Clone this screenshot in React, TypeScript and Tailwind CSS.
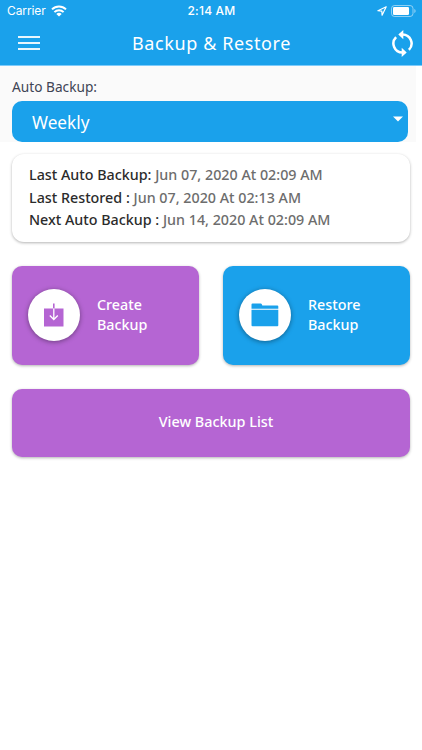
import React from 'react';

const backupInfo = [
  { label: 'Last Auto Backup:', value: 'Jun 07, 2020 At 02:09 AM' },
  { label: 'Last Restored :', value: 'Jun 07, 2020 At 02:13 AM' },
  { label: 'Next Auto Backup :', value: 'Jun 14, 2020 At 02:09 AM' }
];

const WifiIcon = () => (
  <svg width="16" height="12" viewBox="0 0 16 12" fill="none" stroke="white" strokeWidth="2">
    <path d="M1 4.4a10 10 0 0 1 14 0" />
    <path d="M3.4 7.1a6.6 6.6 0 0 1 9.2 0" />
    <path d="M8 11.6 5.3 9a3.9 3.9 0 0 1 5.4 0Z" fill="white" stroke="none" />
  </svg>
);

const LocationIcon = () => (
  <svg width="10" height="10" viewBox="0 0 10 10" fill="none" stroke="white" strokeWidth="1.2" strokeLinejoin="round">
    <path d="M9.2.8.9 4.7l3.9.4.3 4.1Z" />
  </svg>
);

const BatteryIcon = () => (
  <svg width="25" height="12" viewBox="0 0 25 12" fill="none">
    <rect x=".5" y=".5" width="21.5" height="11" rx="3" stroke="white" strokeOpacity=".5" />
    <rect x="2" y="2" width="16" height="8" rx="1.3" fill="white" />
    <path d="M23.3 4v4c.8-.3 1.3-1.1 1.3-2s-.5-1.7-1.3-2Z" fill="white" fillOpacity=".5" />
  </svg>
);

const SyncIcon = () => (
  <svg width="21" height="27" viewBox="0 0 21 27" fill="none">
    <path d="M10.5 4.4a9.1 9.1 0 0 1 6.4 15.5M10.5 22.6A9.1 9.1 0 0 1 4.1 7.100" stroke="white" strokeWidth="2.500" />
    <path d="M6.300 4.500 11.300 0v9.200ZM14.700 22.500l-5 4.500v-9.200Z" fill="white" />
  </svg>
);

const DownloadIcon = () => (
  <svg width="20" height="24" viewBox="0 0 20 24" fill="none">
    <path d="M0 5.5h19.5v18H0Z" fill="#b565d3" />
    <path d="M9.8.5v5" stroke="#b565d3" strokeWidth="1.6" />
    <path d="M9.8 5.5v11M5.8 12.5l4 4 4-4" stroke="white" strokeWidth="1.3" />
  </svg>
);

const FolderIcon = () => (
  <svg width="28" height="24" viewBox="0 0 28 24" fill="#1aa1eb">
    <path d="M.5 5.7V1.5Q.5.5 1.5.5h8.3q.7 0 1 .7l.5 1.3h15q1 0 1 1v2.2Z" />
    <path d="M.5 6.7h26.8v15.5q0 1-1 1H1.5q-1 0-1-1Z" />
  </svg>
);

const App = () => {
  return (
    <div className="min-h-[750px] bg-white font-['Noto_Sans',sans-serif]">
      <header className="h-[66px] bg-[#1aa1eb] border-b border-[#7dcbfb] text-white">
        <div className="h-[22px] grid grid-cols-3 items-center pl-[7px] pr-[6px] font-['Inter',sans-serif]">
          <div className="flex items-center gap-[5px] text-[12px]">
            <span className="w-[39px] tracking-[-0.1px]">Carrier</span>
            <WifiIcon />
          </div>
          <span className="text-center text-[12px] font-medium tracking-[0.2px]">2:14 AM</span>
          <div className="flex items-center justify-end gap-1">
            <LocationIcon />
            <BatteryIcon />
          </div>
        </div>
        <div className="h-[43px] flex items-center justify-between pl-[18px] pr-[9px]">
          <button className="w-[22px] flex flex-col gap-1 pb-[2px]">
            <span className="h-[2px] bg-white/90" />
            <span className="h-[2px] bg-white/90" />
            <span className="h-[2px] bg-white/90" />
          </button>
          <h1 className="pr-[9px] text-[18px] tracking-[0.6px]">Backup &amp; Restore</h1>
          <button>
            <SyncIcon />
          </button>
        </div>
      </header>

      <section className="w-[416px] h-[76px] bg-[#fafafa] pl-3 pt-[11px]">
        <p className="h-6 text-[13.7px] leading-[20px] text-[#3f4555]">Auto Backup:</p>
        <button className="w-[396px] h-[41px] rounded-[10px] bg-[#1aa1eb] flex items-center justify-between pl-5 pr-[5px] text-white">
          <span className="pt-[2px] text-[17.2px]">Weekly</span>
          <svg width="10" height="6" viewBox="0 0 10 6" fill="white" className="mb-[5px]">
            <path d="M0 .5h10l-5 5Z" />
          </svg>
        </button>
      </section>

      <main className="px-3 pt-3">
        <div className="h-[88px] rounded-[12px] bg-white px-[17px] pt-[10px] shadow-[0_1px_3px_rgba(0,0,0,0.3)]">
          {backupInfo.map((item) => (
            <p key={item.label} className="text-[14.3px] leading-[22.5px] font-medium text-[#6d6d6d]">
              <span className="text-[#2b2b2b]">{item.label}</span> {item.value}
            </p>
          ))}
        </div>

        <div className="grid grid-cols-2 gap-6 mt-6">
          <button className="h-[99px] rounded-[10px] bg-[#b565d3] flex items-center gap-[17px] pl-4 pb-[2px] text-left text-white shadow-[0_1px_3px_rgba(0,0,0,0.3)]">
            <span className="size-[52px] rounded-full bg-white flex items-center justify-center shadow-[0_1px_5px_rgba(0,0,0,0.4)]">
              <DownloadIcon />
            </span>
            <span className="text-[14.3px] leading-[19.5px] font-medium">Create<br />Backup</span>
          </button>
          <button className="h-[99px] rounded-[10px] bg-[#1aa1eb] flex items-center gap-[17px] pl-4 pb-[2px] text-left text-white shadow-[0_1px_3px_rgba(0,0,0,0.3)]">
            <span className="size-[52px] rounded-full bg-white flex items-center justify-center shadow-[0_1px_5px_rgba(0,0,0,0.4)]">
              <FolderIcon />
            </span>
            <span className="text-[14.3px] leading-[19.5px] font-medium">Restore<br />Backup</span>
          </button>
        </div>

        <button className="w-full h-[68px] mt-6 pl-[10px] pb-[2px] rounded-[10px] bg-[#b565d3] text-[14.4px] font-medium text-white shadow-[0_1px_3px_rgba(0,0,0,0.3)]">
          View Backup List
        </button>
      </main>
    </div>
  );
};

export default App;
